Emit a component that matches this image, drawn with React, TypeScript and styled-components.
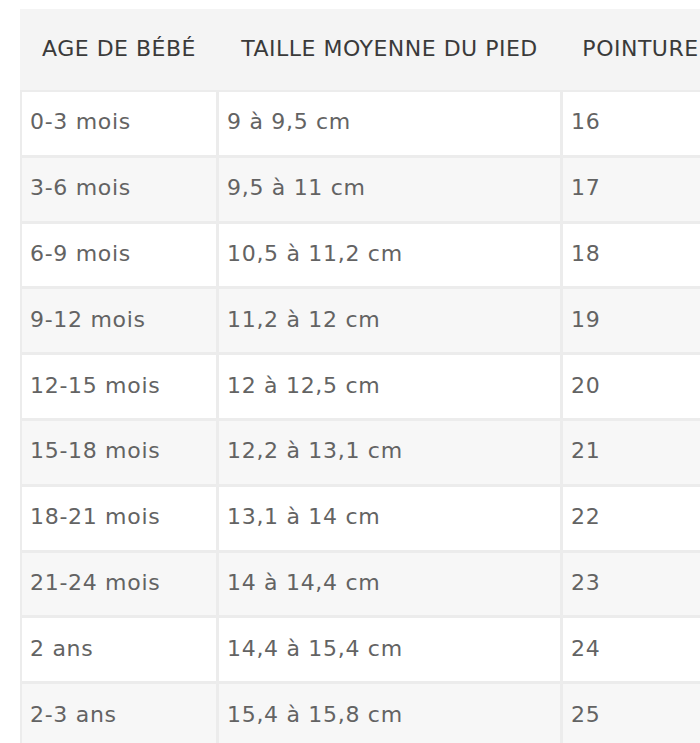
import React from 'react';
import styled, { createGlobalStyle } from 'styled-components';

const GlobalStyle = createGlobalStyle`
  html, body {
    margin: 0;
    padding: 0;
    background: #fff;
    overflow: hidden;
  }
`;

const Page = styled.div`
  width: 700px;
  height: 743px;
  overflow: hidden;
  padding: 9px 0 0 20px;
  box-sizing: border-box;
  font-family: 'DejaVu Sans', 'Open Sans', sans-serif;
`;

const Table = styled.div`
  width: 760px;
`;

const HeadRow = styled.div`
  display: grid;
  grid-template-columns: 194px 341px 155px;
  column-gap: 3px;
  padding-left: 2px;
  height: 81px;
  background: #f4f4f4;
`;

const HeadCell = styled.div`
  display: flex;
  align-items: center;
  justify-content: center;
  font-size: 22px;
  letter-spacing: 0.5px;
  color: #3a3a3a;
  white-space: nowrap;
  padding-bottom: 2px;
`;

const Body = styled.div`
  display: grid;
  grid-template-columns: 194px 341px 155px;
  gap: 3px;
  padding: 2px 0 0 2px;
  background: #ececec;
`;

const Cell = styled.div<{ $shaded: boolean }>`
  display: flex;
  align-items: center;
  height: 62.8px;
  padding: 0 0 3px 8px;
  box-sizing: border-box;
  font-size: 22px;
  letter-spacing: 0.7px;
  color: #636363;
  white-space: nowrap;
  background: ${(p) => (p.$shaded ? '#f7f7f7' : '#fff')};
`;

const rows: [string, string, string][] = [
  ['0-3 mois', '9 à 9,5 cm', '16'],
  ['3-6 mois', '9,5 à 11 cm', '17'],
  ['6-9 mois', '10,5 à 11,2 cm', '18'],
  ['9-12 mois', '11,2 à 12 cm', '19'],
  ['12-15 mois', '12 à 12,5 cm', '20'],
  ['15-18 mois', '12,2 à 13,1 cm', '21'],
  ['18-21 mois', '13,1 à 14 cm', '22'],
  ['21-24 mois', '14 à 14,4 cm', '23'],
  ['2 ans', '14,4 à 15,4 cm', '24'],
  ['2-3 ans', '15,4 à 15,8 cm', '25'],
];

export default function App() {
  return (
    <Page>
      <GlobalStyle />
      <Table>
        <HeadRow>
          <HeadCell>AGE DE BÉBÉ</HeadCell>
          <HeadCell>TAILLE MOYENNE DU PIED</HeadCell>
          <HeadCell>POINTURE</HeadCell>
        </HeadRow>
        <Body>
          {rows.map((r, i) =>
            r.map((v, j) => (
              <Cell key={`${i}-${j}`} $shaded={i % 2 === 1}>
                {v}
              </Cell>
            ))
          )}
        </Body>
      </Table>
    </Page>
  );
}
